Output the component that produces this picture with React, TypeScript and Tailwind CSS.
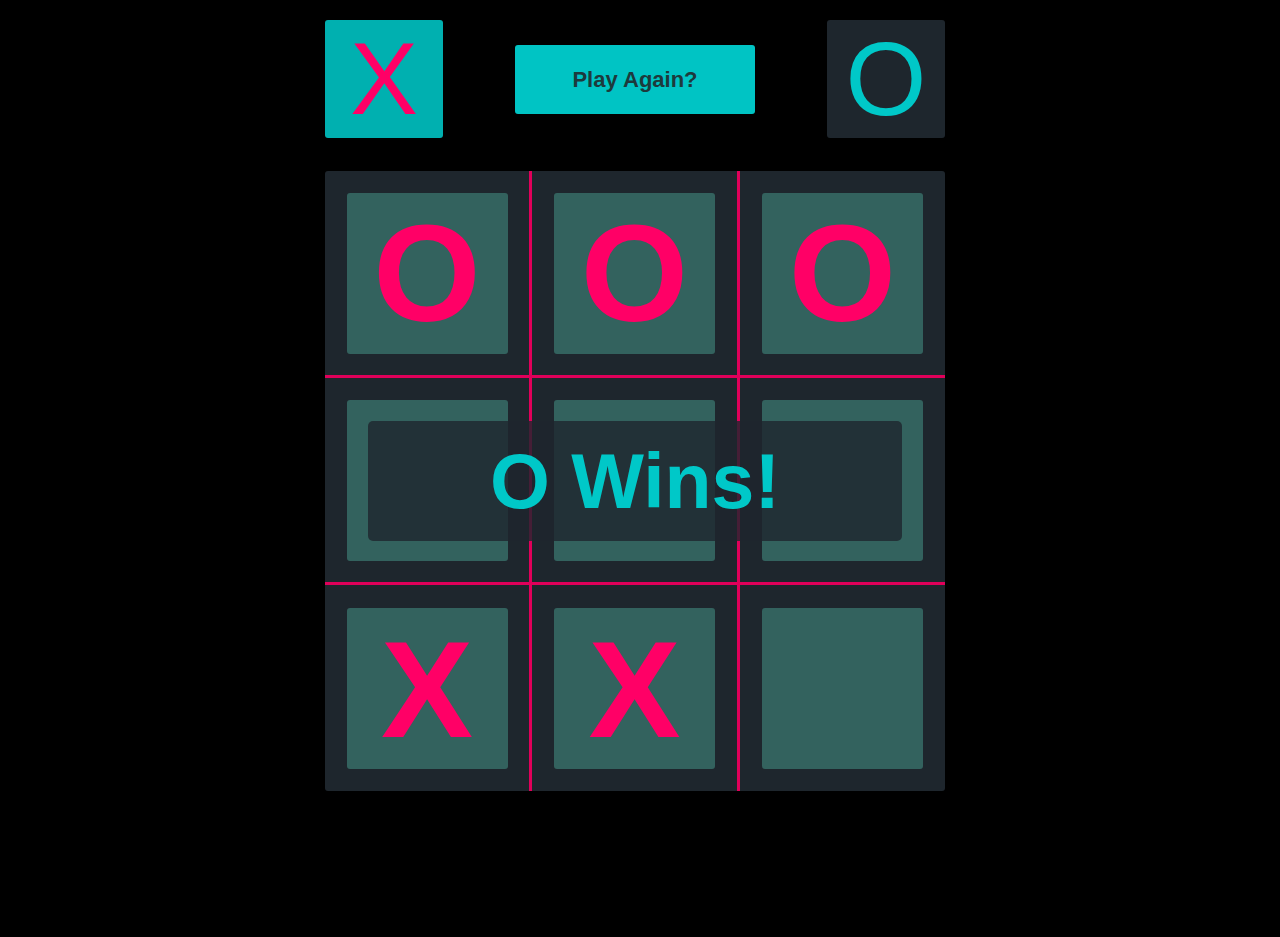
/**
 * App — tic-tac-toe board after a finished round.
 *
 * Shows the two player badges, the "Play Again?" button,
 * the 3x3 board and the winner banner laid over it.
 */

type Mark = 'X' | 'O' | '';

const BOARD: Mark[] = ['O', 'O', 'O', '', '', '', 'X', 'X', ''];

const FONT = { fontFamily: '"Liberation Sans", Arial, sans-serif' };

function Cell({ mark, index }: { mark: Mark; index: number }) {
  const col = index % 3;
  const row = Math.floor(index / 3);
  return (
    <div
      className={`flex h-[207px] items-center justify-center ${
        col < 2 ? 'border-r-[3px] border-r-[#e0005a]' : ''
      } ${row < 2 ? 'border-b-[3px] border-b-[#e0005a]' : ''}`}
    >
      <div className="flex h-[161px] w-[161px] items-center justify-center rounded-[3px] bg-[#33625e]">
        <span className="text-[138px] font-bold leading-none text-[#ff0066]">{mark}</span>
      </div>
    </div>
  );
}

export default function App() {
  return (
    <div className="min-h-screen bg-black" style={FONT}>
      <div className="flex justify-center pr-[10px] pt-5">
        <div className="w-[620px]">
          {/* ── Players and restart ── */}
          <div className="flex items-center justify-between">
            <div className="flex h-[118px] w-[118px] items-center justify-center rounded-[3px] bg-[#00b0b0]">
              <span className="text-[102px] leading-none text-[#ff0066]">X</span>
            </div>
            <button className="h-[69px] w-[240px] rounded-[3px] bg-[#00c4c4] text-[22px] font-bold text-[#1d3a3c]">
              Play Again?
            </button>
            <div className="flex h-[118px] w-[118px] items-center justify-center rounded-[3px] bg-[#1e262d]">
              <span className="text-[104px] leading-none text-[#00c8c8]">O</span>
            </div>
          </div>

          {/* ── Board ── */}
          <div className="relative mt-[33px] h-[620px] overflow-hidden rounded-[3px] bg-[#1e262d]">
            <div className="grid grid-cols-[207px_208px_1fr]">
              {BOARD.map((mark, i) => (
                <Cell key={i} mark={mark} index={i} />
              ))}
            </div>

            {/* ── Winner banner ── */}
            <div className="absolute left-[43px] top-[250px] flex h-[120px] w-[534px] items-center justify-center rounded-[5px] bg-[#1e262d]/80">
              <span className="text-[77px] font-bold leading-none text-[#00c8c8]">O Wins!</span>
            </div>
          </div>
        </div>
      </div>
    </div>
  );
}
